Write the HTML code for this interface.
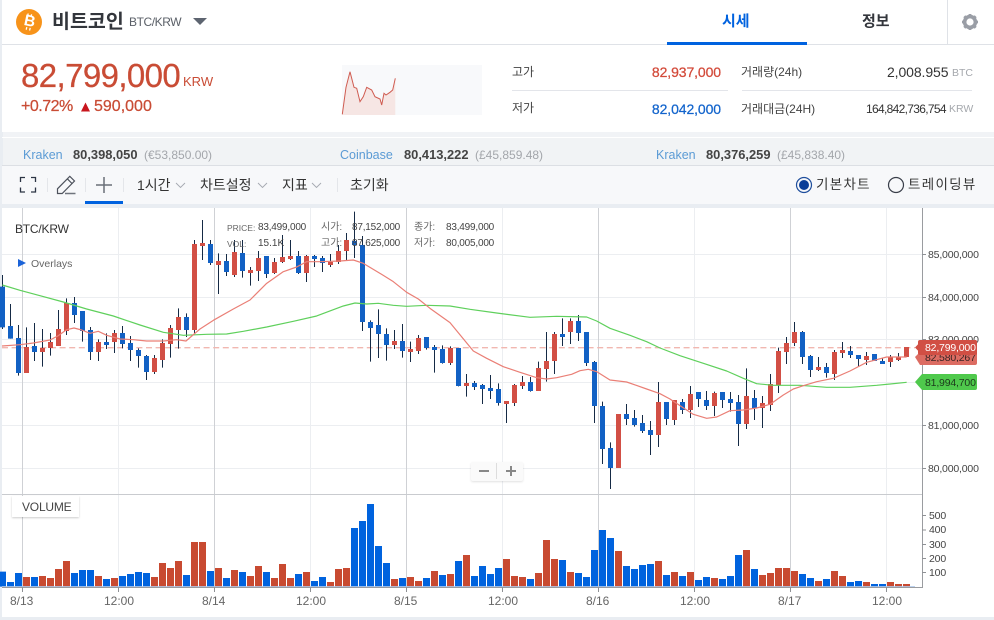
<!DOCTYPE html>
<html lang="ko"><head><meta charset="utf-8"><title>BTC/KRW</title>
<style>
html,body{margin:0;padding:0;width:994px;height:620px;overflow:hidden;background:#e9edf2}
body{position:relative;font-family:"Liberation Sans","Noto Sans CJK KR",sans-serif;color:#333}
.b{position:absolute}
.t{position:absolute;white-space:nowrap;line-height:16px}
.ax{font-size:10.5px;color:#444;letter-spacing:-.18px}
.m{-webkit-text-stroke:.25px currentColor}
svg{position:absolute;left:0;top:0}
</style></head><body>
<div class="b" style="left:2px;top:0;width:992px;height:44px;background:#fff"></div>
<div class="b" style="left:2px;top:44px;width:992px;height:1px;background:#dfe2e7"></div>
<div class="b" style="left:2px;top:45px;width:992px;height:87px;background:#fff"></div>
<div class="b" style="left:3px;top:132px;width:991px;height:5px;background:#f1f3f6"></div>
<div class="b" style="left:2px;top:137px;width:992px;height:1px;background:#fff"></div>
<div class="b" style="left:3px;top:138px;width:991px;height:27px;background:#f1f3f5"></div>
<div class="b" style="left:2px;top:165px;width:992px;height:1px;background:#dcdfe4"></div>
<div class="b" style="left:2px;top:166px;width:992px;height:38px;background:#f7f8fa"></div>
<div class="b" style="left:2px;top:208px;width:992px;height:409px;background:#fff"></div>
<div class="b" style="left:667px;top:42px;width:140px;height:3px;background:#0062df"></div>
<div class="b" style="left:947px;top:0;width:1px;height:44px;background:#dfe2e7"></div>
<div class="b" style="left:85px;top:201px;width:38px;height:3px;background:#0062df"></div>

<svg width="994" height="620" viewBox="0 0 994 620">
<circle cx="29" cy="22" r="13" fill="#f7931a"/>
<path d="M28.2 13.5l-.6 2.6M31.6 14.3l-.6 2.6M26.800 27.100l-.6 2.600M30.200 27.900l-.6 2.600" stroke="#fff" stroke-width="1.300"/>
<path d="M193 18h14l-7 7z" fill="#5d6470"/>
<circle cx="970" cy="22" r="5.4" fill="none" stroke="#9a9ea6" stroke-width="3.6"/>
<path d="M970 14v3M970 27v3M962 22h3M975 22h3M964.3 16.3l2.200 2.200M973.500 25.500l2.200 2.200M975.700 16.300l-2.200 2.200M966.500 25.500l-2.200 2.200" stroke="#9a9ea6" stroke-width="2.8"/>
<rect x="342" y="65" width="140" height="50" fill="#f8f9fb"/>
<path d="M342.300 114.300L346 87.300 350 71.700 354 87.300 356.700 88.300 360 101.700 363.300 96.700 366.700 87.300 371.700 90 375 96.700 380 99 381.700 105 384 93.300 386 95 390 92.300 392.700 90 395.300 78.300V115H342.300z" fill="#f6e6e4"/>
<path d="M342.300 114.300L346 87.300 350 71.700 354 87.300 356.700 88.300 360 101.700 363.300 96.700 366.700 87.300 371.700 90 375 96.700 380 99 381.700 105 384 93.300 386 95 390 92.300 392.700 90 395.300 78.300" fill="none" stroke="#cf5b50" stroke-width="1"/>
<path d="M512 90.500h216M742 90.500h230" stroke="#e3e5ea" stroke-width="1"/>
<path d="M81 111.500l4.500-9 4.500 9z" fill="#c8161d"/>

<!-- toolbar icons -->
<path d="M20.500 182v-4.500H25M31 177.500h4.500V182M35.500 187.500V192H31M25 192h-4.500v-4.500" fill="none" stroke="#2c3545" stroke-width="1.300"/>
<path d="M47.500 178v14M85.500 178v14M123.500 178v14M337.500 178v14" stroke="#e4e6ea"/>
<path d="M57.500 193.500v-4.700L69.800 176.300l4.700 4.700-12.300 12.500zM67.300 178.800l4.700 4.700" fill="none" stroke="#4d525c" stroke-width="1.200"/>
<path d="M65 193.500h10.500" stroke="#6f747d" stroke-width="1.500"/>
<path d="M104 177v16M96 185h16" stroke="#6a6f78" stroke-width="1.500"/>
<path d="M176 183l4.500 4.500 4.500-4.500M258 183l4.500 4.500 4.500-4.500M312 183l4.500 4.500 4.500-4.500" fill="none" stroke="#a5a9b1" stroke-width=".9"/>
<circle cx="804" cy="185" r="7.500" fill="none" stroke="#1f4f9d" stroke-width="1.200"/>
<circle cx="804" cy="185" r="5" fill="#0a3d97"/>
<circle cx="896" cy="185" r="7.500" fill="none" stroke="#3a3f4a" stroke-width="1.200"/>

<!-- grid -->
<path d="M2 254.500H922M2 297.500H922M2 339.500H922M2 382.500H922M2 425.500H922M2 468.500H922" stroke="#eceef1"/>
<path d="M118.500 208V587M310.500 208V587M502.500 208V587M694.500 208V587M886.500 208V587" stroke="#eceef1"/>
<path d="M22.500 208V587M214.500 208V587M406.500 208V587M598.500 208V587M790.500 208V587" stroke="#cfd1d5"/>
<path d="M2 494.500H922" stroke="#c9cbcf"/>
<path d="M922.500 208V588M2 587.500H923" stroke="#9a9ca0"/>
<path d="M22.500 587v5M118.500 587v5M214.500 587v5M310.500 587v5M406.500 587v5M502.500 587v5M598.500 587v5M694.500 587v5M790.500 587v5M886.500 587v5M922 254.500h4M922 297.500h4M922 339.500h4M922 382.500h4M922 425.500h4M922 468.500h4M922 515.500h4M922 530h4M922 544.500h4M922 558.500h4M922 572.500h4" stroke="#8f9195"/>

<path d="M2 347.700H915" stroke="#f1b7b0" stroke-width="1.300" stroke-dasharray="6 3.600"/>

<!-- candles -->
<g transform="translate(0 205) scale(1 .33333)" fill="none">
<path stroke="#152a45" stroke-width="1" d="M2.500 210V372M10.500 297V401M18.500 360V512M26.500 367V504M34.500 354V468M42.500 372V485M50.500 384V452M58.500 315V423M66.500 280V390M74.500 276V354M82.500 318V410M90.500 366V465M98.500 403V468M106.500 385V432M114.500 375V444M122.500 363V430M130.500 393V468M138.500 430V488M146.500 450V525M154.500 450V507M162.500 403V488M170.500 360V458M178.500 310V431M186.500 325V396M194.500 105V384M202.500 45V165M210.500 105V180M218.500 145V267M226.500 147V213M234.500 105V216M242.500 105V218M250.500 186V242M258.500 138V228M266.500 153V219M274.500 159V207M282.500 90V174M290.500 105V165M298.500 138V207M306.500 150V231M314.500 150V186M322.500 153V201M330.500 147V186M338.500 120V177M346.500 84V165M354.500 20V159M362.500 93V378M370.500 346V470M378.500 313V459M386.500 370V467M394.500 375V432M402.500 357V458M410.500 410V471M418.500 390V447M426.500 396V434M434.500 420V503M442.500 421V476M450.500 424V480M458.500 429V544M466.500 507V575M474.500 528V555M482.500 537V597M490.500 510V582M498.500 535V602M506.500 588V654M514.500 537V603M522.500 513V552M530.500 516V560M538.500 470V558M546.500 381V530M554.500 381V507M562.500 340V423M570.500 340V417M578.500 330V408M586.500 381V483M594.500 468V654M602.500 590V777M610.500 712V852M618.500 627V789M626.500 597V660M634.500 615V665M642.500 630V684M650.500 648V750M658.500 531V726M666.500 591V660M674.500 585V660M682.500 582V627M690.500 543V639M698.500 561V606M706.500 558V615M714.500 560V633M722.500 561V609M730.500 561V620M738.500 570V723M746.500 490V672M754.500 555V645M762.500 573V669M770.500 507V618M778.500 428V564M786.500 396V477M794.500 351V423M802.500 378V477M810.500 450V516M818.500 456V498M826.500 474V518M834.500 435V525M842.500 411V459M850.500 423V459M858.500 450V485M866.500 441V480M874.500 447V468M882.500 459V477M890.500 450V486M898.500 444V468M906.500 426V456"/>
<path stroke="#1261c4" stroke-width="5" d="M2.500 245V367M10.500 363V401M18.500 399V504M34.500 423V441M74.500 294V330M82.500 318V378M90.500 375V441M106.500 411V420M122.500 384V417M130.500 414V435M138.500 435V453M146.500 453V501M186.500 336V375M210.500 117V174M226.500 168V201M242.500 144V198M266.500 153V207M298.500 153V204M314.500 153V162M322.500 159V174M354.500 108V120M362.500 120V351M370.500 351V369M378.500 360V387M386.500 387V420M402.500 408V438M426.500 396V429M434.500 426V435M442.500 432V474M458.500 429V543M474.500 534V546M482.500 540V552M490.500 549V558M498.500 552V594M530.500 531V558M562.500 387V396M578.500 348V384M586.500 381V474M594.500 471V603M602.500 603V732M610.500 729V789M626.500 627V642M634.500 639V660M642.500 654V678M650.500 675V690M666.500 591V642M682.500 591V615M698.500 561V582M706.500 585V603M722.500 561V585M730.500 582V594M738.500 591V657M754.500 579V609M802.500 381V456M810.500 453V495M826.500 486V504M850.500 438V450M858.500 450V462M874.500 447V468M882.500 468V477"/>
<path stroke="#d24f45" stroke-width="5" d="M26.500 426V504M42.500 429V441M50.500 411V429M58.500 372V423M66.500 294V378M98.500 411V441M114.500 384V411M154.500 459V501M162.500 414V465M170.500 369V417M178.500 336V375M194.500 117V375M202.500 114V123M218.500 168V180M234.500 141V210M250.500 195V204M258.500 159V198M274.500 171V204M282.500 156V171M290.500 153V162M306.500 153V204M330.500 171V180M338.500 138V171M346.500 105V138M394.500 408V420M410.500 432V441M418.500 399V438M450.500 429V474M466.500 534V543M506.500 588V597M514.500 540V594M522.500 531V543M538.500 489V558M546.500 468V492M554.500 387V468M570.500 348V381M618.500 627V789M658.500 591V690M674.500 585V645M690.500 567V615M714.500 564V603M746.500 573V657M762.500 594V609M770.500 537V600M778.500 438V540M786.500 414V441M794.500 381V414M818.500 486V495M834.500 441V507M842.500 435V444M866.500 453V465M890.500 456V471M898.500 456V465M906.500 426V456"/>
</g>

<!-- moving averages -->
<g transform="translate(0 205) scale(.33333)" fill="none" stroke-width="3.600" stroke-linejoin="round">
<path stroke="#5fd05c" d="M7 240L60 256 120 272 190 291 260 312 340 333 420 360 490 382 550 391 620 388 680 387 730 379 800 366 880 349 950 333 990 318 1030 303 1065 294 1100 297 1135 295 1180 301 1220 304 1280 301 1350 303 1410 313 1490 324 1590 337 1670 334 1760 336 1790 348 1830 370 1890 391 1940 410 1980 429 2040 452 2110 475 2180 498 2230 520 2270 536 2320 541 2400 541 2480 547 2550 547 2630 541 2720 532"/>
<path stroke="#ea7f76" d="M6 423L60 419 100 414 150 405 175 392 200 374 222 369 245 375 270 385 295 379 320 391 360 402 400 404 440 408 490 408 530 404 558 408 600 372 640 346 700 312 750 285 800 235 850 200 890 186 920 170 960 170 1020 168 1060 165 1090 175 1140 205 1180 230 1220 262 1255 282 1290 310 1350 353 1420 438 1460 460 1510 485 1560 502 1610 518 1640 522 1670 518 1715 508 1740 497 1765 493 1790 500 1830 525 1880 531 1940 552 1980 566 2010 582 2040 602 2080 628 2120 640 2150 636 2190 617 2230 615 2270 609 2310 598 2350 570 2380 552 2410 542 2450 530 2500 520 2550 498 2600 472 2660 456 2720 456"/>
</g>

<!-- volume -->
<g transform="translate(0 490) scale(1 .33333)" fill="none">
<path stroke="#0063de" stroke-width="7" d="M2.500 245V290M10.500 276V290M18.500 249V290M34.500 261V290M74.500 249V290M82.500 240V290M90.500 240V290M106.500 267V290M122.500 258V290M130.500 252V290M138.500 246V290M146.500 249V290M186.500 255V290M210.500 243V290M226.500 264V290M242.500 246V290M266.500 246V290M298.500 252V290M314.500 273V290M322.500 261V290M354.500 114V290M362.500 93V290M370.500 42V290M378.500 168V290M386.500 219V290M402.500 264V290M426.500 264V290M442.500 255V290M458.500 213V290M474.500 258V290M482.500 228V290M490.500 252V290M498.500 234V290M530.500 267V290M562.500 210V290M578.500 249V290M586.500 261V290M594.500 180V290M602.500 120V290M610.500 144V290M626.500 228V290M634.500 237V290M642.500 225V290M650.500 222V290M666.500 255V290M682.500 258V290M698.500 270V290M706.500 261V290M722.500 267V290M730.500 258V290M738.500 195V290M754.500 237V290M802.500 252V290M810.500 264V290M826.500 267V290M850.500 276V290M858.500 273V290M874.500 282V290M882.500 282V290"/>
<path stroke="#c84a31" stroke-width="7" d="M26.500 261V290M42.500 258V290M50.500 264V290M58.500 237V290M66.500 213V290M98.500 258V290M114.500 264V290M154.500 261V290M162.500 219V290M170.500 234V290M178.500 213V290M194.500 156V290M202.500 156V290M218.500 234V290M234.500 240V290M250.500 258V290M258.500 228V290M274.500 264V290M282.500 222V290M290.500 264V290M306.500 246V290M330.500 276V290M338.500 237V290M346.500 234V290M394.500 267V290M410.500 261V290M418.500 273V290M434.500 243V290M450.500 252V290M466.500 195V290M506.500 207V290M514.500 258V290M522.500 261V290M538.500 249V290M546.500 150V290M554.500 207V290M570.500 246V290M618.500 183V290M658.500 213V290M674.500 246V290M690.500 246V290M714.500 264V290M746.500 180V290M762.500 255V290M770.500 249V290M778.500 234V290M786.500 234V290M794.500 243V290M818.500 273V290M834.500 243V290M842.500 258V290M866.500 276V290M890.500 276V290M898.500 282V290M906.500 282V290"/>
</g>
<path d="M2 586.500H915" stroke="#a9c4ea" stroke-width=".8"/>

<!-- price tags -->
<path d="M915 357l5-5h55a2 2 0 0 1 2 2v9a2 2 0 0 1-2 2h-55z" fill="#dc6c62"/>
<path d="M915 347.500l7-7.500h53a2 2 0 0 1 2 2v11a2 2 0 0 1-2 2h-53z" fill="#d14f44"/>
<path d="M915 382l7-8h53a2 2 0 0 1 2 2v12a2 2 0 0 1-2 2h-53z" fill="#4fc94c"/>
</svg>

<!-- header -->
<div class="t" style="left:23.5px;top:14px;font-size:15.5px;color:#fff;font-weight:700;transform:rotate(12deg)">B</div>
<div class="t" style="left:52px;top:10px;font-size:19.5px;line-height:24px;font-weight:700;color:#33363c">비트코인</div>
<div class="t" style="left:129px;top:14px;font-size:12px;color:#5b6068;letter-spacing:-.42px">BTC/KRW</div>
<div class="t" style="left:722px;top:13px;font-size:15px;line-height:18px;font-weight:700;color:#0062df">시세</div>
<div class="t" style="left:862px;top:13px;font-size:15px;line-height:18px;font-weight:700;color:#33363c">정보</div>

<div class="t m" style="left:21px;top:57px;font-size:33px;line-height:38px;color:#c94c35;letter-spacing:-.6px">82,799,000</div>
<div class="t" style="left:183px;top:74px;font-size:13px;color:#c94c35">KRW</div>
<div class="t m" style="left:21px;top:97px;font-size:16px;line-height:20px;color:#c94c35;letter-spacing:-.5px">+0.72%</div>
<div class="t m" style="left:94px;top:97px;font-size:16px;line-height:20px;color:#c94c35">590,000</div>

<div class="t" style="left:512px;top:64px;font-size:12px;color:#444">고가</div>
<div class="t" style="left:512px;top:100px;font-size:12px;color:#444">저가</div>
<div class="t m" style="right:273px;top:64px;font-size:14px;color:#d34a3a;letter-spacing:-.1px">82,937,000</div>
<div class="t m" style="right:273px;top:101px;font-size:14px;color:#1264cc;letter-spacing:-.1px">82,042,000</div>
<div class="t" style="left:741px;top:64px;font-size:12px;color:#444">거래량(24h)</div>
<div class="t" style="left:741px;top:101px;font-size:12px;color:#444">거래대금(24H)</div>
<div class="t" style="left:887px;top:64px;font-size:14px;color:#333;letter-spacing:-.1px">2,008.955</div>
<div class="t" style="left:952px;top:65px;font-size:10.5px;color:#a5a8ad">BTC</div>
<div class="t" style="left:866px;top:101px;font-size:12px;letter-spacing:-.68px;color:#333">164,842,736,754</div>
<div class="t" style="left:949px;top:101px;font-size:10.5px;color:#a5a8ad">KRW</div>

<!-- ticker -->
<div class="t" style="left:23px;top:147px;font-size:12.5px;color:#5b9bd5">Kraken</div>
<div class="t" style="left:73px;top:147px;font-size:12.9px;font-weight:700;color:#444">80,398,050</div>
<div class="t" style="left:144px;top:147px;font-size:12px;color:#a3a6ab">(€53,850.00)</div>
<div class="t" style="left:340px;top:147px;font-size:12.5px;color:#5b9bd5">Coinbase</div>
<div class="t" style="left:404px;top:147px;font-size:12.9px;font-weight:700;color:#444">80,413,222</div>
<div class="t" style="left:475px;top:147px;font-size:12px;color:#a3a6ab">(£45,859.48)</div>
<div class="t" style="left:656px;top:147px;font-size:12.5px;color:#5b9bd5">Kraken</div>
<div class="t" style="left:706px;top:147px;font-size:12.9px;font-weight:700;color:#444">80,376,259</div>
<div class="t" style="left:777px;top:147px;font-size:12px;color:#a3a6ab">(£45,838.40)</div>

<!-- toolbar -->
<div class="t" style="left:137px;top:177px;font-size:14px;color:#333">1시간</div>
<div class="t" style="left:200px;top:177px;font-size:14px;color:#333">차트설정</div>
<div class="t" style="left:282px;top:177px;font-size:14px;color:#333">지표</div>
<div class="t" style="left:350px;top:177px;font-size:14px;color:#333">초기화</div>
<div class="t" style="left:816px;top:177px;font-size:13.5px;color:#333;letter-spacing:1.3px">기본차트</div>
<div class="t" style="left:908px;top:177px;font-size:13.5px;color:#333;letter-spacing:1.3px">트레이딩뷰</div>

<!-- chart overlays -->
<div class="t" style="left:15px;top:221px;font-size:12px;color:#333;letter-spacing:-.2px">BTC/KRW</div>
<div class="b" style="left:18px;top:259px;width:0;height:0;border-left:8px solid #1b63d8;border-top:4.5px solid transparent;border-bottom:4.5px solid transparent"></div>
<div class="t" style="left:31px;top:256px;font-size:10.5px;color:#666">Overlays</div>
<div class="t" style="left:227px;top:220px;font-size:8.5px;color:#666">PRICE:</div>
<div class="t" style="left:258px;top:220px;font-size:10px;color:#444;letter-spacing:-.2px">83,499,000</div>
<div class="t" style="left:227px;top:236px;font-size:8.5px;color:#666">VOL:</div>
<div class="t" style="left:258px;top:236px;font-size:10px;color:#444">15.1K</div>
<div class="t" style="left:321px;top:220px;font-size:10px;color:#666">시가:</div>
<div class="t" style="left:352px;top:220px;font-size:10px;color:#444;letter-spacing:-.2px">87,152,000</div>
<div class="t" style="left:321px;top:236px;font-size:10px;color:#666">고가:</div>
<div class="t" style="left:352px;top:236px;font-size:10px;color:#444;letter-spacing:-.2px">87,625,000</div>
<div class="t" style="left:414px;top:220px;font-size:10px;color:#666">종가:</div>
<div class="t" style="left:446px;top:220px;font-size:10px;color:#444;letter-spacing:-.2px">83,499,000</div>
<div class="t" style="left:414px;top:236px;font-size:10px;color:#666">저가:</div>
<div class="t" style="left:446px;top:236px;font-size:10px;color:#444;letter-spacing:-.2px">80,005,000</div>

<div class="b" style="left:471px;top:462px;width:52px;height:19px;background:#fafafa;border-radius:2px;box-shadow:0 1px 2px rgba(0,0,0,.12)"></div>
<div class="b" style="left:479px;top:470px;width:10px;height:2px;background:#888"></div>
<div class="b" style="left:506px;top:470px;width:10px;height:2px;background:#888"></div>
<div class="b" style="left:510px;top:466px;width:2px;height:10px;background:#888"></div>
<div class="b" style="left:496px;top:463px;width:1px;height:16px;background:#ddd"></div>

<div class="b" style="left:12px;top:496px;width:67px;height:21px;background:#fff;box-shadow:0 1px 2px rgba(0,0,0,.2)"></div>
<div class="t" style="left:22px;top:499px;font-size:12px;color:#444;letter-spacing:-.2px">VOLUME</div>

<!-- y axis -->
<div class="t ax" style="left:928px;top:247px">85,000,000</div>
<div class="t ax" style="left:928px;top:290px">84,000,000</div>
<div class="t ax" style="left:928px;top:332px">83,000,000</div>
<div class="t ax" style="left:928px;top:418px">81,000,000</div>
<div class="t ax" style="left:928px;top:461px">80,000,000</div>
<div class="b" style="left:918px;top:340px;width:59px;height:15px;background:#d14f44;border-radius:2px"></div>
<div class="t ax" style="left:925px;top:355px;height:7px;overflow:hidden;line-height:6px;color:#3a2524">82,580,267</div>
<div class="t ax" style="left:925px;top:340px;color:#fff">82,799,000</div>
<div class="t ax" style="left:925px;top:375px;color:#1c3a1c">81,994,700</div>
<div class="t ax" style="left:929px;top:508px">500</div>
<div class="t ax" style="left:929px;top:522px">400</div>
<div class="t ax" style="left:929px;top:537px">300</div>
<div class="t ax" style="left:929px;top:551px">200</div>
<div class="t ax" style="left:929px;top:565px">100</div>

<!-- x axis -->
<div class="t" style="left:10px;top:593px;font-size:12px;color:#666">8/13</div>
<div class="t" style="left:104px;top:593px;font-size:12px;color:#666">12:00</div>
<div class="t" style="left:202px;top:593px;font-size:12px;color:#666">8/14</div>
<div class="t" style="left:296px;top:593px;font-size:12px;color:#666">12:00</div>
<div class="t" style="left:394px;top:593px;font-size:12px;color:#666">8/15</div>
<div class="t" style="left:488px;top:593px;font-size:12px;color:#666">12:00</div>
<div class="t" style="left:586px;top:593px;font-size:12px;color:#666">8/16</div>
<div class="t" style="left:680px;top:593px;font-size:12px;color:#666">12:00</div>
<div class="t" style="left:778px;top:593px;font-size:12px;color:#666">8/17</div>
<div class="t" style="left:872px;top:593px;font-size:12px;color:#666">12:00</div>
</body></html>
